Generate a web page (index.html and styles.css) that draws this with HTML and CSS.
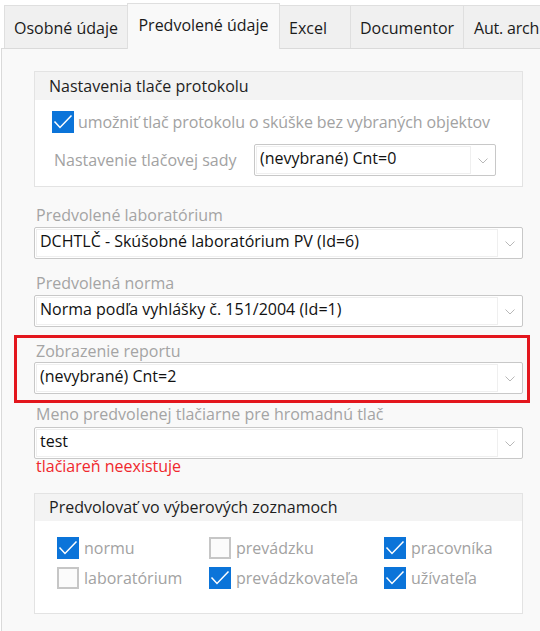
FILE: index.html
```html
<!DOCTYPE html>
<html lang="sk">
<head>
<meta charset="utf-8">
<title>Predvolené údaje</title>
<link rel="stylesheet" href="styles.css">
</head>
<body>
<nav class="tabs">
  <div class="tab tab-osobne">Osobné údaje</div>
  <div class="tab tab-active">Predvolené údaje</div>
  <div class="tab tab-excel">Excel</div>
  <div class="tab tab-doc">Documentor</div>
  <div class="tab tab-aut">Aut. arch</div>
</nav>
<main class="panel">
  <section class="group group-print">
    <header class="group-head">Nastavenia tlače protokolu</header>
    <div class="group-body print-body">
      <div class="check-row">
        <span class="cb cb-on"><svg viewBox="0 0 22 22" width="22" height="22"><path d="M2.5 10.5 L8 16.5 L19.5 4.5" fill="none" stroke="#fff" stroke-width="1.5"/></svg></span>
        <span class="cb-label">umožniť tlač protokolu o skúške bez vybraných objektov</span>
      </div>
      <div class="inline-field">
        <span class="inline-label">Nastavenie tlačovej sady</span>
        <div class="combo combo-short">
          <div class="combo-field">(nevybrané) Cnt=0</div>
          <div class="combo-arrow"><svg viewBox="0 0 10 6" width="10" height="6"><path d="M0.5 0.5 L5 5 L9.5 0.5" fill="none" stroke="#b8b8b8" stroke-width="1"/></svg></div>
        </div>
      </div>
    </div>
  </section>

  <div class="field field-first">
    <div class="field-label">Predvolené laboratórium</div>
    <div class="combo">
      <div class="combo-field">DCHTLČ - Skúšobné laboratórium PV (Id=6)</div>
      <div class="combo-arrow"><svg viewBox="0 0 10 6" width="10" height="6"><path d="M0.5 0.5 L5 5 L9.5 0.5" fill="none" stroke="#b8b8b8" stroke-width="1"/></svg></div>
    </div>
  </div>

  <div class="field">
    <div class="field-label">Predvolená norma</div>
    <div class="combo">
      <div class="combo-field">Norma podľa vyhlášky č. 151/2004 (Id=1)</div>
      <div class="combo-arrow"><svg viewBox="0 0 10 6" width="10" height="6"><path d="M0.5 0.5 L5 5 L9.5 0.5" fill="none" stroke="#b8b8b8" stroke-width="1"/></svg></div>
    </div>
  </div>

  <div class="field field-marked">
    <div class="field-label">Zobrazenie reportu</div>
    <div class="combo combo-tight">
      <div class="combo-field">(nevybrané) Cnt=2</div>
      <div class="combo-arrow"><svg viewBox="0 0 10 6" width="10" height="6"><path d="M0.5 0.5 L5 5 L9.5 0.5" fill="none" stroke="#b8b8b8" stroke-width="1"/></svg></div>
    </div>
    <div class="mark"></div>
  </div>

  <div class="field field-printer">
    <div class="field-label">Meno predvolenej tlačiarne pre hromadnú tlač</div>
    <div class="combo combo-loose">
      <div class="combo-field">test</div>
      <div class="combo-arrow"><svg viewBox="0 0 10 6" width="10" height="6"><path d="M0.5 0.5 L5 5 L9.5 0.5" fill="none" stroke="#b8b8b8" stroke-width="1"/></svg></div>
    </div>
    <div class="field-error">tlačiareň neexistuje</div>
  </div>

  <section class="group group-lists">
    <header class="group-head head-small">Predvolovať vo výberových zoznamoch</header>
    <div class="group-body lists-body">
      <div class="check-row">
        <span class="cb cb-on"><svg viewBox="0 0 22 22" width="22" height="22"><path d="M2.5 10.5 L8 16.5 L19.5 4.5" fill="none" stroke="#fff" stroke-width="1.5"/></svg></span>
        <span class="cb-label">normu</span>
      </div>
      <div class="check-row">
        <span class="cb cb-off"></span>
        <span class="cb-label">prevádzku</span>
      </div>
      <div class="check-row">
        <span class="cb cb-on"><svg viewBox="0 0 22 22" width="22" height="22"><path d="M2.5 10.5 L8 16.5 L19.5 4.5" fill="none" stroke="#fff" stroke-width="1.5"/></svg></span>
        <span class="cb-label">pracovníka</span>
      </div>
      <div class="check-row">
        <span class="cb cb-off"></span>
        <span class="cb-label">laboratórium</span>
      </div>
      <div class="check-row">
        <span class="cb cb-on"><svg viewBox="0 0 22 22" width="22" height="22"><path d="M2.5 10.5 L8 16.5 L19.5 4.5" fill="none" stroke="#fff" stroke-width="1.5"/></svg></span>
        <span class="cb-label">prevádzkovateľa</span>
      </div>
      <div class="check-row">
        <span class="cb cb-on"><svg viewBox="0 0 22 22" width="22" height="22"><path d="M2.5 10.5 L8 16.5 L19.5 4.5" fill="none" stroke="#fff" stroke-width="1.5"/></svg></span>
        <span class="cb-label">užívateľa</span>
      </div>
    </div>
  </section>
</main>
</body>
</html>
```
FILE: styles.css
```css
* { box-sizing: border-box; }

html, body {
  margin: 0;
  padding: 0;
  overflow: hidden;
  background: #ffffff;
}

body {
  width: 540px;
  height: 631px;
  font-family: "Open Sans", "Noto Sans", "DejaVu Sans", sans-serif;
  font-size: 16px;
  color: #1a1a1a;
}

/* ---------- tabs ---------- */
.tabs {
  display: flex;
  align-items: flex-end;
  height: 48px;
  padding-left: 4px;
  position: relative;
  z-index: 1;
  white-space: nowrap;
}

.tab {
  flex: none;
  height: 43px;
  padding-top: 12px;
  line-height: 20px;
  background: #f0f0f0;
  border: 1px solid #dfdfdf;
  border-bottom: none;
  margin-left: -1px;
  text-align: center;
  color: #1b1b1b;
  overflow: hidden;
}

.tab-osobne { width: 124px; margin-left: 0; }
.tab-active {
  width: 153px;
  height: 46px;
  padding-top: 11px;
  margin-bottom: -1px;
  background: #f9f9f9;
}
.tab-excel { width: 72px; text-align: left; padding-left: 9px; }
.tab-doc { width: 114px; }
.tab-aut {
  width: 78px;
  text-align: left;
  padding-left: 10px;
  border-right: none;
  letter-spacing: -0.2px;
}

/* ---------- panel ---------- */
.panel {
  margin-left: 1px;
  width: 560px;
  height: 600px;
  background: #f9f9f9;
  border: 1px solid #dadada;
  padding: 22px 0 0 32px;
}

/* ---------- group boxes ---------- */
.group {
  width: 489px;
  background: #ffffff;
  border: 1px solid #e3e3e3;
}

.group-head {
  height: 28px;
  line-height: 28px;
  padding-left: 14px;
  background: #f3f3f3;
  color: #1e1e1e;
}

.head-small {
  height: 27px;
  line-height: 27px;
}

.print-body {
  padding: 11px 0 10px 17px;
}

.check-row {
  display: flex;
  align-items: center;
  height: 22px;
  gap: 5px;
  line-height: 22px;
  white-space: nowrap;
}

.print-body .check-row { gap: 4px; }
.print-body .cb-label { letter-spacing: -0.1px; }

.cb {
  flex: none;
  width: 22px;
  height: 22px;
  display: block;
}

.cb svg { display: block; }

.cb-on { background: #0b74d9; }

.cb-off {
  background: #fbfbfb;
  border: 2px solid #c6c6c6;
}

.cb-label { color: #a2a2a2; }

.inline-field {
  display: flex;
  align-items: center;
  margin-top: 11px;
}

.inline-label {
  flex: none;
  width: 202px;
  padding-left: 2px;
  color: #a2a2a2;
  white-space: nowrap;
}

/* ---------- combos ---------- */
.combo {
  display: flex;
  height: 32px;
  margin-top: 2px;
  padding: 1px;
  background: #ffffff;
  border: 1px solid #c8c8c8;
  border-radius: 2px;
}

.combo-short {
  width: 242px;
  margin-top: 0;
}

.combo-tight { margin-top: 1px; }
.combo-loose { margin-top: 3px; }

.combo-field {
  flex: 1;
  min-width: 0;
  border: 1px solid #efefef;
  padding-left: 3px;
  line-height: 22px;
  color: #111111;
  white-space: nowrap;
  overflow: hidden;
}

.combo-arrow {
  flex: none;
  width: 23px;
  display: flex;
  align-items: center;
  justify-content: center;
  padding-top: 1px;
}

.combo-arrow svg { display: block; }

/* ---------- fields ---------- */
.field {
  width: 489px;
  margin-top: 14px;
}

.field-first { margin-top: 18px; }

.field-label {
  padding-left: 2px;
  line-height: 20px;
  color: #a4a4a4;
  white-space: nowrap;
}

.field-marked { position: relative; }

.mark {
  position: absolute;
  top: -6px;
  left: -20px;
  right: -7px;
  bottom: -9px;
  border: 3px solid #e3161d;
  pointer-events: none;
}

.field-printer { margin-top: 10px; }

.field-error {
  padding-left: 2px;
  line-height: 14px;
  color: #f0282d;
}

.group-lists { margin-top: 20px; }

.lists-body {
  display: grid;
  grid-template-columns: 152px 175px 1fr;
  row-gap: 8px;
  padding: 16px 0 24px 22px;
}
```
